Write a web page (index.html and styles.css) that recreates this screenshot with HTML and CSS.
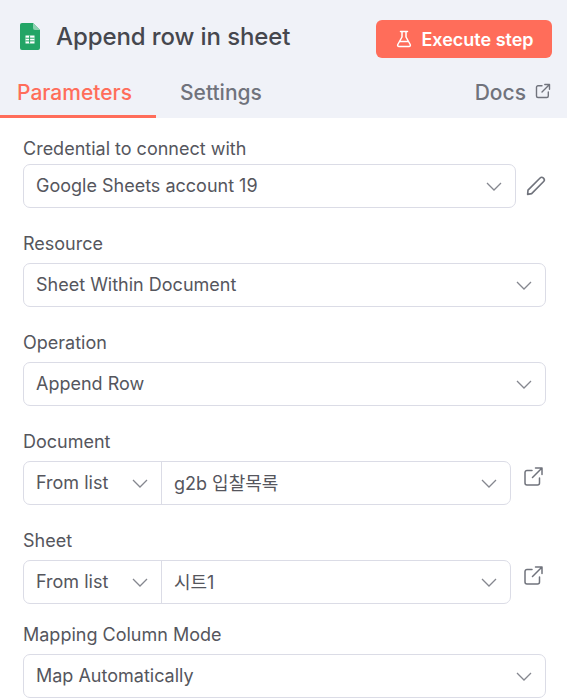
FILE: index.html
```html
<!DOCTYPE html>
<html lang="en">
<head>
    <meta charset="UTF-8">
    <meta name="viewport" content="width=device-width, initial-scale=1.0">
    <title>Append row in sheet</title>
    <link rel="stylesheet" href="styles.css">
</head>
<body>
    <!-- Header -->
    <header class="header">
        <div class="title-row">
            <svg class="sheets-icon" width="20" height="27" viewBox="0 0 20 27">
                <path d="M2 0H13L20 7V25a2 2 0 0 1-2 2H2a2 2 0 0 1-2-2V2a2 2 0 0 1 2-2Z" fill="#23a566"/>
                <path d="M13 0L20 7H15a2 2 0 0 1-2-2Z" fill="#8ed1b1"/>
                <path d="M5.500 12.500H14.500V20.500H5.500Z" fill="#fff"/>
                <path d="M5.500 15.200H14.500M5.500 17.900H14.500M9.600 12.500V20.500" stroke="#23a566" stroke-width="1"/>
            </svg>
            <h1 class="title">Append row in sheet</h1>
            <button class="execute-button">
                <svg width="16" height="18" viewBox="0 0 16 18" fill="none" stroke="#fff" stroke-width="1.500" stroke-linecap="round" stroke-linejoin="round">
                    <path d="M4.500 1.500H11.500M6 1.500V7L1.800 14.500C1.300 15.500 1.900 16.500 3 16.500H13C14.100 16.500 14.700 15.500 14.200 14.500L10 7V1.500M3.800 11.500H12.200"/>
                </svg>
                Execute step
            </button>
        </div>
        <nav class="tabs">
            <a class="tab tab-active">Parameters</a>
            <a class="tab">Settings</a>
            <a class="tab tab-docs">
                Docs
                <svg class="external-small" width="16" height="16" viewBox="0 0 16 16" fill="none" stroke="#70737c" stroke-width="1.400" stroke-linecap="round" stroke-linejoin="round">
                    <path d="M7 2.700H3a1.500 1.500 0 0 0-1.500 1.500V13A1.500 1.500 0 0 0 3 14.500H11.800A1.500 1.500 0 0 0 13.300 13V9M9.800 1.500H14.500V6.200M14.500 1.500L7 9"/>
                </svg>
            </a>
        </nav>
    </header>

    <!-- Form -->
    <main class="form">
        <div class="field field-first">
            <label class="label">Credential to connect with</label>
            <div class="input-row">
                <div class="select select-credential">
                    <span>Google Sheets account 19</span>
                    <svg class="chevron" width="16" height="9" viewBox="0 0 16 9"><path d="M1 1L8 8L15 1"/></svg>
                </div>
                <svg class="pencil" width="20" height="20" viewBox="0 0 22 22" fill="none" stroke="#70737c" stroke-width="1.800" stroke-linejoin="round">
                    <path d="M2.200 15.500L15.500 2.200C16.500 1.200 18 1.200 19.200 2.400C20.400 3.600 20.400 5.100 19.400 6.100L6.200 19.400L1.800 20.200Z"/>
                </svg>
            </div>
        </div>

        <div class="field">
            <label class="label">Resource</label>
            <div class="select">
                <span>Sheet Within Document</span>
                <svg class="chevron" width="16" height="9" viewBox="0 0 16 9"><path d="M1 1L8 8L15 1"/></svg>
            </div>
        </div>

        <div class="field">
            <label class="label">Operation</label>
            <div class="select">
                <span>Append Row</span>
                <svg class="chevron" width="16" height="9" viewBox="0 0 16 9"><path d="M1 1L8 8L15 1"/></svg>
            </div>
        </div>

        <div class="field">
            <label class="label">Document</label>
            <div class="input-row">
                <div class="locator">
                    <div class="locator-mode">
                        <span>From list</span>
                        <svg class="chevron" width="16" height="9" viewBox="0 0 16 9"><path d="M1 1L8 8L15 1"/></svg>
                    </div>
                    <div class="locator-value">
                        <span>g2b 입찰목록</span>
                        <svg class="chevron" width="16" height="9" viewBox="0 0 16 9"><path d="M1 1L8 8L15 1"/></svg>
                    </div>
                </div>
                <svg class="external" width="19" height="19" viewBox="0 0 19 19" fill="none" stroke="#70737c" stroke-width="1.500" stroke-linecap="round" stroke-linejoin="round">
                    <path d="M8 3.500H3a2 2 0 0 0-2 2V16a2 2 0 0 0 2 2H13.500a2 2 0 0 0 2-2V11M11.500 1H18V7.500M18 1L8.500 10.500"/>
                </svg>
            </div>
        </div>

        <div class="field field-tight">
            <label class="label">Sheet</label>
            <div class="input-row">
                <div class="locator">
                    <div class="locator-mode">
                        <span>From list</span>
                        <svg class="chevron" width="16" height="9" viewBox="0 0 16 9"><path d="M1 1L8 8L15 1"/></svg>
                    </div>
                    <div class="locator-value">
                        <span>시트1</span>
                        <svg class="chevron" width="16" height="9" viewBox="0 0 16 9"><path d="M1 1L8 8L15 1"/></svg>
                    </div>
                </div>
                <svg class="external" width="19" height="19" viewBox="0 0 19 19" fill="none" stroke="#70737c" stroke-width="1.500" stroke-linecap="round" stroke-linejoin="round">
                    <path d="M8 3.500H3a2 2 0 0 0-2 2V16a2 2 0 0 0 2 2H13.500a2 2 0 0 0 2-2V11M11.500 1H18V7.500M18 1L8.500 10.500"/>
                </svg>
            </div>
        </div>

        <div class="field">
            <label class="label">Mapping Column Mode</label>
            <div class="select">
                <span>Map Automatically</span>
                <svg class="chevron" width="16" height="9" viewBox="0 0 16 9"><path d="M1 1L8 8L15 1"/></svg>
            </div>
        </div>
    </main>
</body>
</html>
```

FILE: styles.css
```css
/* Base */
body {
    margin: 0;
    height: 700px;
    overflow: hidden;
    background-color: #fff;
    color: #55565d;
    font-family: Inter, "Noto Sans CJK KR", sans-serif;
}

/* Header */
.header {
    height: 118px;
    background-color: #f0f2f8;
    box-sizing: border-box;
    display: flex;
    flex-direction: column;
}

.title-row {
    height: 75px;
    box-sizing: border-box;
    padding: 20px 15px 0 20px;
    display: flex;
    align-items: flex-start;
}

.sheets-icon {
    margin-top: 3px;
    flex-shrink: 0;
}

.title {
    margin: 2px 0 0 16px;
    font-size: 24px;
    line-height: 30px;
    font-weight: 500;
    letter-spacing: -0.1px;
    color: #46474e;
    flex: 1;
}

.execute-button {
    width: 176px;
    height: 38px;
    padding: 0 0 0 2px;
    display: flex;
    align-items: center;
    justify-content: center;
    gap: 9px;
    background-color: #ff6d5a;
    color: #fff;
    border: none;
    border-radius: 6px;
    font-family: inherit;
    font-size: 18px;
    font-weight: 600;
}

/* Tabs */
.tabs {
    flex: 1;
    display: flex;
    align-items: stretch;
}

.tab {
    box-sizing: border-box;
    padding: 3px 0 0;
    font-size: 21px;
    line-height: 30px;
    font-weight: 500;
    color: #70737c;
    margin-left: 24px;
}

.tab-active {
    width: 156px;
    margin-left: 0;
    padding-left: 17px;
    color: #ff6d5a;
    border-bottom: 3px solid #ff6d5a;
}

.tab-docs {
    margin-left: auto;
    margin-right: 16px;
    display: flex;
    align-items: flex-start;
    gap: 9px;
}

.external-small {
    margin-top: 5px;
}

/* Form */
.form {
    padding: 21px 21px 0 23px;
}

.field {
    margin-bottom: 26px;
}

.field-tight {
    margin-bottom: 21px;
}

.label {
    display: block;
    height: 20px;
    margin-bottom: 9px;
    font-size: 18px;
    line-height: 20px;
    color: #55565d;
}

.field-first .label {
    margin-bottom: 5px;
}

.input-row {
    display: flex;
    align-items: center;
}

.select,
.locator {
    height: 44px;
    box-sizing: border-box;
    border: 1px solid #dbdce6;
    border-radius: 7px;
    background-color: #fff;
    font-size: 18px;
    display: flex;
    align-items: center;
}

.select span,
.locator span {
    margin-top: -2px;
}

.select {
    justify-content: space-between;
    padding: 0 13px 0 12px;
}

.select-credential {
    width: 493px;
    flex-shrink: 0;
}

.chevron {
    flex-shrink: 0;
    fill: none;
    stroke: #85878f;
    stroke-width: 1.300;
}

.pencil {
    margin: 0 0 1px 10px;
}

.locator {
    width: 488px;
    flex-shrink: 0;
}

.locator-mode {
    width: 138px;
    height: 100%;
    box-sizing: border-box;
    padding: 0 13px 0 12px;
    border-right: 1px solid #dbdce6;
    display: flex;
    align-items: center;
    justify-content: space-between;
}

.locator-value {
    flex: 1;
    padding: 0 13px 0 12px;
    display: flex;
    align-items: center;
    justify-content: space-between;
}

.external {
    margin: -14px 0 0 13px;
}
```
